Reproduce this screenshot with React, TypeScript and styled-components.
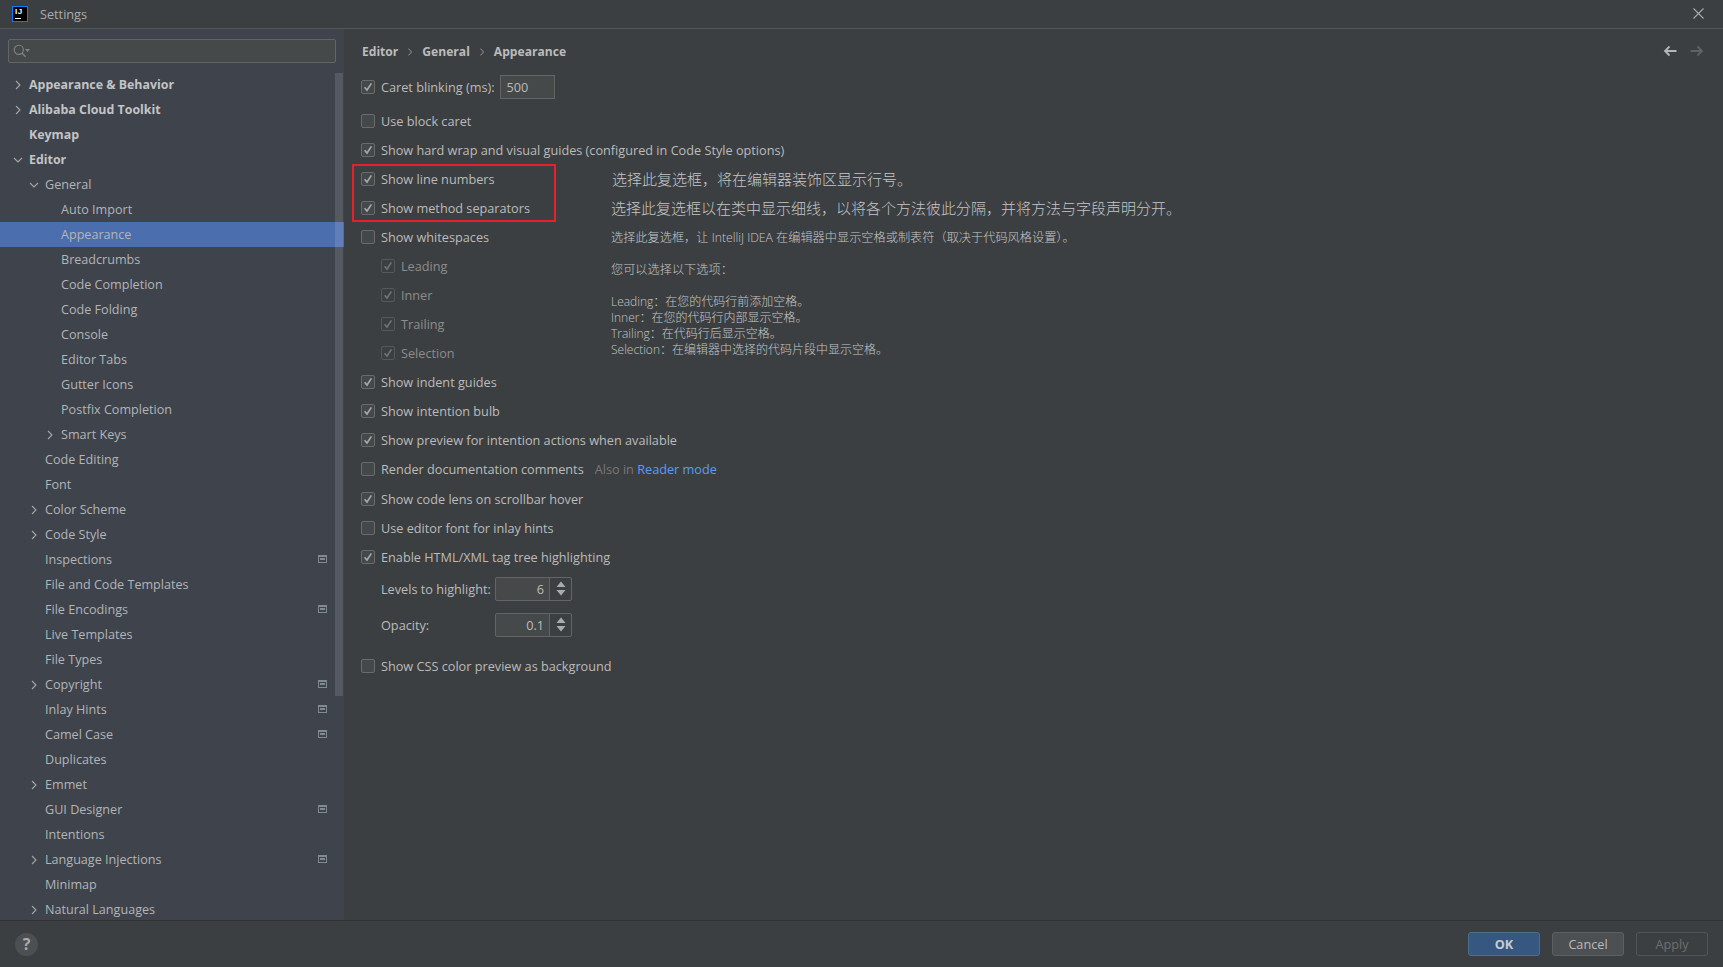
import styled, { createGlobalStyle } from 'styled-components';

const GlobalStyle = createGlobalStyle`
  html, body {
    margin: 0;
    padding: 0;
    background: #3c3f41;
    overflow: hidden;
  }
  * {
    box-sizing: border-box;
  }
`;

type TreeItem = {
  label: string;
  level: number;
  arrow?: 'right' | 'down';
  strong?: boolean;
  selected?: boolean;
  badge?: boolean;
};

const treeItems: TreeItem[] = [
  { label: 'Appearance & Behavior', level: 0, arrow: 'right', strong: true },
  { label: 'Alibaba Cloud Toolkit', level: 0, arrow: 'right', strong: true },
  { label: 'Keymap', level: 0, strong: true },
  { label: 'Editor', level: 0, arrow: 'down', strong: true },
  { label: 'General', level: 1, arrow: 'down' },
  { label: 'Auto Import', level: 2 },
  { label: 'Appearance', level: 2, selected: true },
  { label: 'Breadcrumbs', level: 2 },
  { label: 'Code Completion', level: 2 },
  { label: 'Code Folding', level: 2 },
  { label: 'Console', level: 2 },
  { label: 'Editor Tabs', level: 2 },
  { label: 'Gutter Icons', level: 2 },
  { label: 'Postfix Completion', level: 2 },
  { label: 'Smart Keys', level: 2, arrow: 'right' },
  { label: 'Code Editing', level: 1 },
  { label: 'Font', level: 1 },
  { label: 'Color Scheme', level: 1, arrow: 'right' },
  { label: 'Code Style', level: 1, arrow: 'right' },
  { label: 'Inspections', level: 1, badge: true },
  { label: 'File and Code Templates', level: 1 },
  { label: 'File Encodings', level: 1, badge: true },
  { label: 'Live Templates', level: 1 },
  { label: 'File Types', level: 1 },
  { label: 'Copyright', level: 1, arrow: 'right', badge: true },
  { label: 'Inlay Hints', level: 1, badge: true },
  { label: 'Camel Case', level: 1, badge: true },
  { label: 'Duplicates', level: 1 },
  { label: 'Emmet', level: 1, arrow: 'right' },
  { label: 'GUI Designer', level: 1, badge: true },
  { label: 'Intentions', level: 1 },
  { label: 'Language Injections', level: 1, arrow: 'right', badge: true },
  { label: 'Minimap', level: 1 },
  { label: 'Natural Languages', level: 1, arrow: 'right' },
];

const CheckIcon = () => (
  <svg width="10" height="10" viewBox="0 0 10 10" fill="none">
    <path d="M1.6 5.2 L4 8 L8.4 1.4" stroke="currentColor" strokeWidth="1.7" />
  </svg>
);

const TreeArrow = ({ dir }: { dir: 'right' | 'down' }) => (
  <svg width="10" height="10" viewBox="0 0 10 10" fill="none" stroke="#a4a7a9" strokeWidth="1.1">
    {dir === 'right' ? <path d="M3 1 L7 5 L3 9" /> : <path d="M1 3 L5 7 L9 3" />}
  </svg>
);

const ProjectBadge = () => (
  <svg width="9" height="8" viewBox="0 0 9 8">
    <rect x="0" y="0" width="9" height="8" fill="#7f8b91" />
    <rect x="1" y="2" width="7" height="5" fill="#3e434c" />
    <rect x="2" y="3" width="5" height="2" fill="#7f8b91" />
  </svg>
);

const SearchIcon = () => (
  <svg width="18" height="14" viewBox="0 0 18 14" fill="none">
    <circle cx="5.8" cy="5.8" r="4.6" stroke="#7f8487" strokeWidth="1.1" />
    <path d="M9.2 9.2 L12.6 12.8" stroke="#7f8487" strokeWidth="1.3" />
    <path d="M12 5 L17 5 L14.5 8 Z" fill="#7f8487" />
  </svg>
);

const CrumbArrow = () => (
  <svg width="6" height="8" viewBox="0 0 6 8" fill="none" stroke="#a0a3a5" strokeWidth="0.9">
    <path d="M1.5 0.6 L4.6 4 L1.5 7.4" />
  </svg>
);

const NavArrow = ({ back, color }: { back?: boolean; color: string }) => (
  <svg width="14" height="12" viewBox="0 0 14 12" fill="none" stroke={color} strokeWidth="1.8">
    {back ? <path d="M13.5 6 H2 M6.5 1.5 L2 6 L6.5 10.5" /> : <path d="M0.5 6 H12 M7.5 1.5 L12 6 L7.5 10.5" />}
  </svg>
);

const CloseIcon = () => (
  <svg width="11" height="11" viewBox="0 0 11 11" fill="none" stroke="#a8abad" strokeWidth="1.1">
    <path d="M0.5 0.5 L10.5 10.5 M10.5 0.5 L0.5 10.5" />
  </svg>
);

const SpinArrows = () => (
  <svg width="10" height="15" viewBox="0 0 10 15">
    <path d="M5 0.5 L9.5 6 H0.5 Z" fill="#a9acae" />
    <path d="M5 14.5 L9.5 9 H0.5 Z" fill="#a9acae" />
  </svg>
);

const Check = ({ on, disabled }: { on?: boolean; disabled?: boolean }) => (
  <CheckBox $on={on} $disabled={disabled}>
    {on && <CheckIcon />}
  </CheckBox>
);

const App = () => {
  return (
    <Window>
      <GlobalStyle />
      <TitleBar>
        <Logo>
          <LogoText>IJ</LogoText>
          <LogoBar />
        </Logo>
        <TitleText>Settings</TitleText>
        <CloseButton>
          <CloseIcon />
        </CloseButton>
      </TitleBar>

      <Body>
        <Sidebar>
          <SearchField>
            <SearchIcon />
          </SearchField>
          <Tree>
            {treeItems.map((item) => (
              <TreeRow key={item.label} $level={item.level} $selected={item.selected}>
                <ArrowSlot>{item.arrow && <TreeArrow dir={item.arrow} />}</ArrowSlot>
                <TreeLabel $strong={item.strong}>{item.label}</TreeLabel>
                {item.badge && (
                  <BadgeSlot>
                    <ProjectBadge />
                  </BadgeSlot>
                )}
              </TreeRow>
            ))}
            <ScrollThumb />
          </Tree>
        </Sidebar>

        <Main>
          <Header>
            <Crumbs>
              <Crumb>Editor</Crumb>
              <CrumbArrow />
              <Crumb>General</Crumb>
              <CrumbArrow />
              <Crumb>Appearance</Crumb>
            </Crumbs>
            <NavButtons>
              <NavArrow back color="#b4b7b9" />
              <NavArrow color="#5f6264" />
            </NavButtons>
          </Header>

          <Options>
            <Row>
              <Check on />
              <Label>Caret blinking (ms):</Label>
              <TextInput>500</TextInput>
            </Row>
            <Row $gap={5}>
              <Check />
              <Label>Use block caret</Label>
            </Row>
            <Row>
              <Check on />
              <Label>Show hard wrap and visual guides (configured in Code Style options)</Label>
            </Row>
            <Row>
              <Check on />
              <Label>Show line numbers</Label>
            </Row>
            <Row>
              <Check on />
              <Label>Show method separators</Label>
            </Row>
            <Row>
              <Check />
              <Label>Show whitespaces</Label>
            </Row>
            <Row $nested>
              <Check on disabled />
              <Label $disabled>Leading</Label>
            </Row>
            <Row $nested>
              <Check on disabled />
              <Label $disabled>Inner</Label>
            </Row>
            <Row $nested>
              <Check on disabled />
              <Label $disabled>Trailing</Label>
            </Row>
            <Row $nested>
              <Check on disabled />
              <Label $disabled>Selection</Label>
            </Row>
            <Row>
              <Check on />
              <Label>Show indent guides</Label>
            </Row>
            <Row>
              <Check on />
              <Label>Show intention bulb</Label>
            </Row>
            <Row>
              <Check on />
              <Label>Show preview for intention actions when available</Label>
            </Row>
            <Row>
              <Check />
              <Label>Render documentation comments</Label>
              <Hint>
                Also in <HintLink>Reader mode</HintLink>
              </Hint>
            </Row>
            <Row $gap={1}>
              <Check on />
              <Label>Show code lens on scrollbar hover</Label>
            </Row>
            <Row>
              <Check />
              <Label>Use editor font for inlay hints</Label>
            </Row>
            <Row>
              <Check on />
              <Label>Enable HTML/XML tag tree highlighting</Label>
            </Row>
            <Row $gap={3} $field>
              <FieldLabel>Levels to highlight:</FieldLabel>
              <Spinner>
                <SpinnerValue>6</SpinnerValue>
                <SpinnerButtons>
                  <SpinArrows />
                </SpinnerButtons>
              </Spinner>
            </Row>
            <Row $gap={7} $field>
              <FieldLabel>Opacity:</FieldLabel>
              <Spinner>
                <SpinnerValue>0.1</SpinnerValue>
                <SpinnerButtons>
                  <SpinArrows />
                </SpinnerButtons>
              </Spinner>
            </Row>
            <Row $gap={12}>
              <Check />
              <Label>Show CSS color preview as background</Label>
            </Row>
          </Options>

          {/* 스크린샷 위에 얹은 주석 */}
          <Highlight />
          <Notes>
            <LargeNote $shift={1}>选择此复选框，将在编辑器装饰区显示行号。</LargeNote>
            <LargeNote>选择此复选框以在类中显示细线，以将各个方法彼此分隔，并将方法与字段声明分开。</LargeNote>
            <SmallNote $height={32}>选择此复选框，让 IntelliJ IDEA 在编辑器中显示空格或制表符（取决于代码风格设置）。</SmallNote>
            <SmallNote $height={39}>您可以选择以下选项：</SmallNote>
            <NoteList>
              <div>Leading：在您的代码行前添加空格。</div>
              <div>Inner：在您的代码行内部显示空格。</div>
              <div>Trailing：在代码行后显示空格。</div>
              <div>Selection：在编辑器中选择的代码片段中显示空格。</div>
            </NoteList>
          </Notes>
        </Main>
      </Body>

      <Footer>
        <HelpButton>?</HelpButton>
        <Buttons>
          <DialogButton $kind="primary">OK</DialogButton>
          <DialogButton $kind="normal">Cancel</DialogButton>
          <DialogButton $kind="disabled">Apply</DialogButton>
        </Buttons>
      </Footer>
    </Window>
  );
};

const Window = styled.div`
  width: 1723px;
  height: 967px;
  display: flex;
  flex-direction: column;
  background: #3c3f41;
  color: #bbbbbb;
  font-family: 'Open Sans', 'Noto Sans CJK SC', sans-serif;
  font-size: 12.7px;
`;

const TitleBar = styled.header`
  height: 29px;
  flex: none;
  display: flex;
  align-items: center;
  padding: 0 19px 1px 12px;
  border-bottom: 1px solid #515658;
`;

const Logo = styled.div`
  position: relative;
  width: 16px;
  height: 16px;
  background: #000;
  border: 1px solid #087cfa;
  overflow: hidden;
`;

const LogoText = styled.span`
  display: block;
  color: #fff;
  font: bold 8px/9px 'Liberation Sans', sans-serif;
  padding-left: 2px;
  letter-spacing: 0.5px;
`;

const LogoBar = styled.span`
  position: absolute;
  left: 2px;
  bottom: 2px;
  width: 6px;
  height: 1px;
  background: #fff;
`;

const TitleText = styled.span`
  margin-left: 12px;
  color: #a9acae;
`;

const CloseButton = styled.div`
  margin-left: auto;
  display: flex;
`;

const Body = styled.div`
  flex: 1;
  min-height: 0;
  display: flex;
`;

const Sidebar = styled.aside`
  width: 344px;
  flex: none;
  background: #3e434c;
  display: flex;
  flex-direction: column;
  overflow: hidden;
`;

const SearchField = styled.div`
  height: 24px;
  margin: 10px 8px 9px;
  flex: none;
  display: flex;
  align-items: center;
  padding-left: 4px;
  background: #45494a;
  border: 1px solid #646464;
  border-radius: 2px;
`;

const Tree = styled.div`
  position: relative;
  flex: 1;
  min-height: 0;
  overflow: hidden;
`;

const TreeRow = styled.div<{ $level: number; $selected?: boolean }>`
  height: 25px;
  display: flex;
  align-items: center;
  padding-left: ${(p) => 13 + p.$level * 16}px;
  padding-right: 17px;
  background: ${(p) => (p.$selected ? '#4b6eaf' : 'transparent')};
`;

const ArrowSlot = styled.span`
  width: 16px;
  flex: none;
  display: flex;
`;

const TreeLabel = styled.span<{ $strong?: boolean }>`
  font-weight: ${(p) => (p.$strong ? 700 : 400)};
  font-size: ${(p) => (p.$strong ? 12.4 : 12.6)}px;
  color: ${(p) => (p.$strong ? '#c2c4c6' : '#b3b5b7')};
  white-space: nowrap;
`;

const BadgeSlot = styled.span`
  margin-left: auto;
  display: flex;
  margin-top: -2px;
`;

const ScrollThumb = styled.div`
  position: absolute;
  top: 1px;
  right: 1px;
  width: 8px;
  height: 623px;
  background: rgba(255, 255, 255, 0.12);
`;

const Main = styled.main`
  position: relative;
  flex: 1;
  min-width: 0;
  padding-left: 17px;
`;

const Header = styled.div`
  height: 43px;
  padding: 0 19px 0 0;
  display: flex;
  align-items: center;
  justify-content: space-between;
`;

const Crumbs = styled.div`
  display: flex;
  align-items: center;
  gap: 9px;
  padding: 2px 0 0 1px;
`;

const Crumb = styled.span`
  font-weight: 700;
  font-size: 12.1px;
  color: #bbbbbb;
`;

const NavButtons = styled.div`
  display: flex;
  gap: 13px;
`;

const Options = styled.div`
  display: flex;
  flex-direction: column;
`;

const Row = styled.div<{ $gap?: number; $nested?: boolean; $field?: boolean }>`
  height: 29px;
  flex: none;
  display: flex;
  align-items: center;
  margin-top: ${(p) => p.$gap ?? 0}px;
  padding-left: ${(p) => (p.$nested ? 20 : p.$field ? 20 : 0)}px;
`;

const CheckBox = styled.span<{ $on?: boolean; $disabled?: boolean }>`
  width: 14px;
  height: 14px;
  flex: none;
  display: flex;
  align-items: center;
  justify-content: center;
  border-radius: 2px;
  background: ${(p) => (p.$disabled ? 'transparent' : '#43494a')};
  border: 1px solid ${(p) => (p.$disabled ? '#56595b' : '#6b6b6b')};
  color: ${(p) => (p.$disabled ? '#6f7274' : '#a7a7a7')};
`;

const Label = styled.span<{ $disabled?: boolean }>`
  margin-left: 6px;
  white-space: nowrap;
  color: ${(p) => (p.$disabled ? '#8c8c8c' : '#bbbbbb')};
`;

const TextInput = styled.div`
  width: 55px;
  height: 24px;
  margin-left: 5px;
  padding-left: 6px;
  display: flex;
  align-items: center;
  background: #45494a;
  border: 1px solid #646464;
`;

const Hint = styled.span`
  margin-left: 11px;
  color: #787878;
`;

const HintLink = styled.span`
  color: #589df6;
`;

const FieldLabel = styled.span`
  width: 114px;
  flex: none;
`;

const Spinner = styled.div`
  width: 77px;
  height: 24px;
  display: flex;
  background: #45494a;
  border: 1px solid #646464;
  border-radius: 2px;
`;

const SpinnerValue = styled.span`
  flex: 1;
  display: flex;
  align-items: center;
  justify-content: flex-end;
  padding-right: 5px;
`;

const SpinnerButtons = styled.span`
  width: 22px;
  flex: none;
  display: flex;
  align-items: center;
  justify-content: center;
  background: #3c3f41;
  border-left: 1px solid #646464;
  border-radius: 0 2px 2px 0;
`;

const Highlight = styled.div`
  position: absolute;
  left: 8px;
  top: 135px;
  width: 204px;
  height: 58px;
  border: 2px solid #e8202a;
  pointer-events: none;
`;

const Notes = styled.div`
  position: absolute;
  left: 267px;
  top: 136px;
  display: flex;
  flex-direction: column;
  color: #c4c6c7;
  white-space: nowrap;
`;

const LargeNote = styled.div<{ $shift?: number }>`
  height: 29px;
  line-height: 29px;
  font-size: 15px;
  font-weight: 300;
  padding-left: ${(p) => p.$shift ?? 0}px;
`;

const SmallNote = styled.div<{ $height: number }>`
  height: ${(p) => p.$height}px;
  line-height: 29px;
  font-size: 12.2px;
  font-weight: 300;
`;

const NoteList = styled.div`
  font-size: 12px;
  font-weight: 300;
  line-height: 16px;
`;

const Footer = styled.footer`
  height: 47px;
  flex: none;
  display: flex;
  align-items: center;
  justify-content: space-between;
  padding: 0 15px 0 15px;
  border-top: 1px solid #323232;
`;

const HelpButton = styled.div`
  width: 23px;
  height: 23px;
  border-radius: 50%;
  background: #4c5052;
  color: #a8abad;
  display: flex;
  align-items: center;
  justify-content: center;
  font-weight: 700;
  font-size: 16px;
`;

const Buttons = styled.div`
  display: flex;
  gap: 12px;
`;

const DialogButton = styled.div<{ $kind: 'primary' | 'normal' | 'disabled' }>`
  width: 72px;
  height: 24px;
  display: flex;
  align-items: center;
  justify-content: center;
  border-radius: 3px;
  font-weight: ${(p) => (p.$kind === 'primary' ? 700 : 400)};
  color: ${(p) => (p.$kind === 'primary' ? '#c8ccd0' : p.$kind === 'normal' ? '#bbbbbb' : '#6e6e6e')};
  background: ${(p) => (p.$kind === 'primary' ? '#365880' : p.$kind === 'normal' ? '#4c5052' : 'transparent')};
  border: 1px solid ${(p) => (p.$kind === 'primary' ? '#4c708c' : p.$kind === 'normal' ? '#5e6060' : '#525557')};
`;

export default App;
